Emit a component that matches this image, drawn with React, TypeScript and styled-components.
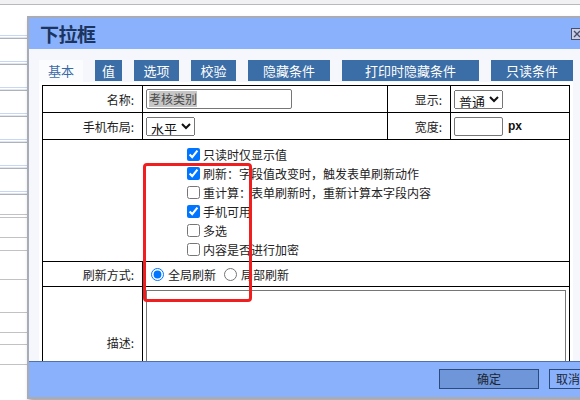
import React from "react";
import styled, { createGlobalStyle } from "styled-components";

const GlobalStyle = createGlobalStyle`
  html, body { margin: 0; padding: 0; background: #fff; overflow: hidden; }
  body { font-family: "Noto Sans CJK SC", "Noto Sans", sans-serif; color: #222; }
`;

const Page = styled.div`
  position: relative;
  width: 580px;
  height: 400px;
  overflow: hidden;
`;

const Backdrop = styled.div`
  display: flex;
  flex-direction: column;
`;

const TopStrip = styled.div`
  height: 4px;
  background: #f1f1f3;
  border-bottom: 1px solid #b9b9bd;
`;

const Spacer = styled.div<{ $h: number }>`
  height: ${(p) => p.$h}px;
`;

const BandRow = styled.div`
  height: 26px;
  box-sizing: border-box;
  border-bottom: 1px solid #aeb3bb;
  box-shadow: inset 0 -1px 0 #dfe7f6, inset 0 -2px 0 #fff, inset 0 -3px 0 #c9d8f0;
`;

const LineRow = styled.div<{ $h: number }>`
  height: ${(p) => p.$h}px;
  box-sizing: border-box;
  border-bottom: 1px solid #c2c2c6;
`;

const Dialog = styled.div`
  position: absolute;
  left: 27px;
  top: 16px;
  width: 566px;
  box-sizing: border-box;
  border: 2px solid #a9abb5;
  background: #f5f7fc;
  box-shadow: 2px 3px 4px rgba(0, 0, 0, 0.35);
  display: flex;
  flex-direction: column;
`;

const TitleBar = styled.div`
  height: 31px;
  background: #8ab1fb;
  display: flex;
  align-items: center;
  justify-content: space-between;
  padding: 0 8px 0 11px;
`;

const Title = styled.div`
  font-size: 19px;
  font-weight: bold;
  color: #1b355f;
  line-height: 1;
  letter-spacing: -0.5px;
`;

const CloseBox = styled.button`
  width: 12px;
  height: 12px;
  padding: 0;
  border: none;
  background: none;
  display: block;
  margin-top: 1px;
`;

const Body = styled.div`
  height: 312px;
  box-sizing: border-box;
  padding: 11px 18px 0 10px;
  overflow: hidden;
  display: flex;
  flex-direction: column;
`;

const Tabs = styled.div`
  display: flex;
  gap: 12px;
  align-items: flex-start;
  height: 22px;
`;

const Tab = styled.div<{ $w: number; $active?: boolean }>`
  width: ${(p) => p.$w}px;
  height: ${(p) => (p.$active ? 22 : 21)}px;
  background: ${(p) => (p.$active ? "#fbfcfe" : "#3b6da6")};
  color: ${(p) => (p.$active ? "#3a6aa6" : "#fff")};
  font-size: 13px;
  display: flex;
  align-items: center;
  justify-content: center;
  padding-bottom: ${(p) => (p.$active ? 1 : 0)}px;
  box-sizing: border-box;
`;

const Panel = styled.div`
  background: #fff;
  padding: 3px;
`;

const Table = styled.table`
  border-collapse: collapse;
  table-layout: fixed;
  width: 528px;
  font-size: 12px;
`;

const Cell = styled.td<{ $h?: number }>`
  border: 1px solid #000;
  padding: 0 0 0 3px;
  height: ${(p) => p.$h ?? 26}px;
  vertical-align: middle;
`;

const LabelCell = styled(Cell)`
  text-align: right;
  padding: 0 8px 0 0;
  color: #222;
`;

const NameBox = styled.div`
  width: 146px;
  height: 20px;
  box-sizing: border-box;
  border: 1px solid #767676;
  border-radius: 2px;
  display: flex;
  align-items: center;
  padding: 0 2px;
`;

const Selected = styled.span`
  background: #c6c6c6;
  color: #4a4a4a;
  font-size: 12px;
  line-height: 16px;
`;

const Select = styled.select`
  font-family: "Noto Sans CJK SC", sans-serif;
  font-size: 13px;
  height: 19px;
  padding: 0;
  color: #111;
  display: block;
`;

const WidthWrap = styled.div`
  display: flex;
  align-items: center;
`;

const TextInput = styled.input`
  width: 49px;
  height: 19px;
  box-sizing: border-box;
  border: 1px solid #767676;
  border-radius: 2px;
  padding: 0;
  margin: 0;
`;

const Unit = styled.span`
  font-family: "Liberation Sans", Arial, sans-serif;
  font-weight: bold;
  font-size: 12px;
  color: #111;
  margin-left: 5px;
`;

const OptionsCell = styled.td`
  border: 1px solid #000;
  height: 114px;
  padding: 5px 0 2px 144px;
  vertical-align: top;
`;

const CheckItem = styled.label`
  display: flex;
  align-items: center;
  gap: 3px;
  height: 19px;
  font-size: 12px;
  color: #222;
  white-space: nowrap;
`;

const Check = styled.input`
  width: 13px;
  height: 13px;
  margin: 0;
`;

const RadioGroup = styled.div`
  display: flex;
  align-items: center;
  padding-left: 5px;
`;

const RadioItem = styled.label`
  display: flex;
  align-items: center;
  gap: 4px;
  margin-right: 8px;
  font-size: 12px;
  color: #222;
`;

const Radio = styled.input`
  width: 13px;
  height: 13px;
  margin: 0;
`;

const TextArea = styled.textarea`
  display: block;
  width: 420px;
  height: 104px;
  box-sizing: border-box;
  border: 1px solid #767676;
  resize: none;
  margin: 0;
`;

const DescCell = styled(Cell)`
  padding: 3px 0 4px 3px;
  vertical-align: top;
`;

const Footer = styled.div`
  height: 36px;
  box-sizing: border-box;
  border-top: 1px solid #4f72ac;
  background: #8ab1fb;
  padding: 7px 0 0 410px;
  display: flex;
  gap: 10px;
  overflow: hidden;
`;

const FooterButton = styled.button<{ $primary?: boolean; $w: number }>`
  flex-shrink: 0;
  width: ${(p) => p.$w}px;
  height: 20px;
  box-sizing: border-box;
  border: 1px solid #2c4a7a;
  background: ${(p) => (p.$primary ? "#6f96d8" : "#8ab1fb")};
  color: #1a2536;
  font-family: "Noto Sans CJK SC", sans-serif;
  font-size: 12px;
  padding: 0;
  line-height: 18px;
`;

const Annotation = styled.div`
  position: absolute;
  left: 143px;
  top: 163px;
  width: 109px;
  height: 139px;
  box-sizing: border-box;
  border: 3px solid #f01e1e;
  border-radius: 4px;
  pointer-events: none;
`;

const tabs = [
  { label: "基本", w: 44, active: true },
  { label: "值", w: 27 },
  { label: "选项", w: 45 },
  { label: "校验", w: 45 },
  { label: "隐藏条件", w: 82 },
  { label: "打印时隐藏条件", w: 137 },
  { label: "只读条件", w: 82 },
];

const options = [
  { label: "只读时仅显示值", checked: true },
  { label: "刷新：字段值改变时，触发表单刷新动作", checked: true },
  { label: "重计算：表单刷新时，重新计算本字段内容", checked: false },
  { label: "手机可用", checked: true },
  { label: "多选", checked: false },
  { label: "内容是否进行加密", checked: false },
];

const lineRows = [20, 3, 20, 13, 29, 33, 20, 12, 20];

export default function App() {
  return (
    <Page>
      <GlobalStyle />
      <Backdrop>
        <TopStrip />
        <Spacer $h={8} />
        {Array.from({ length: 7 }).map((_, i) => (
          <BandRow key={i} />
        ))}
        {lineRows.map((h, i) => (
          <LineRow key={i} $h={h} />
        ))}
      </Backdrop>

      <Dialog>
        <TitleBar>
          <Title>下拉框</Title>
          <CloseBox aria-label="关闭">
            <svg width="12" height="12" viewBox="0 0 12 12">
              <rect x="0.5" y="0.5" width="11" height="11" fill="#c7cfe6" stroke="#4b4b6b" />
              <path d="M3 3 L9 9 M9 3 L3 9" stroke="#4b4b6b" strokeWidth="1.4" />
            </svg>
          </CloseBox>
        </TitleBar>

        <Body>
          <Tabs>
            {tabs.map((t) => (
              <Tab key={t.label} $w={t.w} $active={t.active}>
                {t.label}
              </Tab>
            ))}
          </Tabs>
          <Panel>
            <Table>
              <colgroup>
                <col style={{ width: 100 }} />
                <col style={{ width: 245 }} />
                <col style={{ width: 63 }} />
                <col />
              </colgroup>
              <tbody>
                <tr>
                  <LabelCell>名称:</LabelCell>
                  <Cell>
                    <NameBox>
                      <Selected>考核类别</Selected>
                    </NameBox>
                  </Cell>
                  <LabelCell>显示:</LabelCell>
                  <Cell>
                    <Select defaultValue="普通">
                      <option>普通</option>
                      <option>只读</option>
                    </Select>
                  </Cell>
                </tr>
                <tr>
                  <LabelCell>手机布局:</LabelCell>
                  <Cell>
                    <Select defaultValue="水平">
                      <option>水平</option>
                      <option>垂直</option>
                    </Select>
                  </Cell>
                  <LabelCell>宽度:</LabelCell>
                  <Cell>
                    <WidthWrap>
                      <TextInput type="text" />
                      <Unit>px</Unit>
                    </WidthWrap>
                  </Cell>
                </tr>
                <tr>
                  <OptionsCell colSpan={4}>
                    {options.map((o) => (
                      <CheckItem key={o.label}>
                        <Check type="checkbox" defaultChecked={o.checked} />
                        {o.label}
                      </CheckItem>
                    ))}
                  </OptionsCell>
                </tr>
                <tr>
                  <LabelCell $h={24}>刷新方式:</LabelCell>
                  <Cell colSpan={3} $h={24}>
                    <RadioGroup>
                      <RadioItem>
                        <Radio type="radio" name="refresh" defaultChecked />
                        全局刷新
                      </RadioItem>
                      <RadioItem>
                        <Radio type="radio" name="refresh" />
                        局部刷新
                      </RadioItem>
                    </RadioGroup>
                  </Cell>
                </tr>
                <tr>
                  <LabelCell $h={111}>描述:</LabelCell>
                  <DescCell colSpan={3} $h={104}>
                    <TextArea />
                  </DescCell>
                </tr>
              </tbody>
            </Table>
          </Panel>
        </Body>

        <Footer>
          <FooterButton $primary $w={100}>确定</FooterButton>
          <FooterButton $w={38}>取消</FooterButton>
        </Footer>
      </Dialog>

      <Annotation />
    </Page>
  );
}
